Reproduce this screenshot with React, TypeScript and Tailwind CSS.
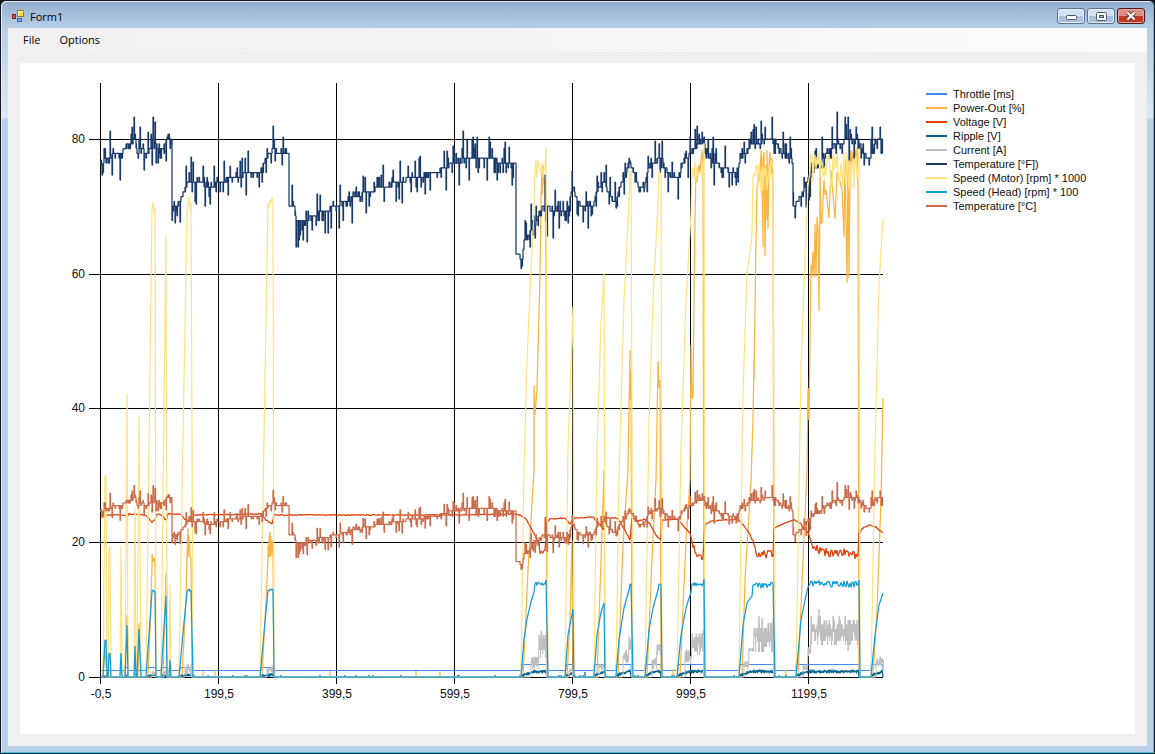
type Point = [number, number];

// Plot area, in drawing units: 0 sits on ZERO_Y, every 20 units are 134.5 high.
const ZERO_Y = 677;
const LEFT = 101;
const RIGHT = 883;

const GRID_X = [
  { x: 100, label: "-0,5" },
  { x: 218, label: "199,5" },
  { x: 336, label: "399,5" },
  { x: 454, label: "599,5" },
  { x: 572, label: "799,5" },
  { x: 690, label: "999,5" },
  { x: 808, label: "1199,5" },
];

const GRID_Y = [
  { y: 139, label: "80" },
  { y: 274, label: "60" },
  { y: 408, label: "40" },
  { y: 542, label: "20" },
  { y: 677, label: "0" },
];

const LEGEND = [
  { name: "Throttle [ms]", line: "bg-[#418cf0]" },
  { name: "Power-Out [%]", line: "bg-[#fcb441]" },
  { name: "Voltage [V]", line: "bg-[#e0400a]" },
  { name: "Ripple [V]", line: "bg-[#056492]" },
  { name: "Current [A]", line: "bg-[#bfbfbf]" },
  { name: "Temperature [°F])", line: "bg-[#1a3b69]" },
  { name: "Speed (Motor) [rpm] * 1000", line: "bg-[#ffe382]" },
  { name: "Speed (Head) [rpm] * 100", line: "bg-[#129cdd]" },
  { name: "Temperature [°C]", line: "bg-[#ca6b4b]" },
];

function makeRandom(seed: number) {
  let s = seed;
  return () => {
    s = (s * 1664525 + 1013904223) % 4294967296;
    return s / 4294967296;
  };
}

function sample(points: Point[], x: number) {
  for (let i = 1; i < points.length; i++) {
    const [x0, y0] = points[i - 1];
    const [x1, y1] = points[i];
    if (x <= x1) return x1 === x0 ? y1 : y0 + ((y1 - y0) * (x - x0)) / (x1 - x0);
  }
  return points[points.length - 1][1];
}

const toPoints = (points: Point[]) =>
  points.map(([x, y]) => `${x.toFixed(1)},${y.toFixed(1)}`).join(" ");

// ---- Temperature -------------------------------------------------------

const tempBase: Point[] = [
  [101, 165], [104, 160], [110, 156], [120, 154], [123, 150], [128, 142], [135, 141],
  [137, 153], [141, 148], [146, 154], [150, 148], [152, 141], [156, 142], [158, 152],
  [163, 147], [166, 140], [171, 140], [172, 204], [176, 206], [180, 200], [184, 192],
  [185, 186], [190, 180], [196, 183], [205, 185], [214, 185], [216, 181], [225, 180],
  [238, 176], [250, 173], [261, 170], [263, 163], [268, 155], [272, 150], [280, 152],
  [288, 154], [289, 205], [294, 205], [296, 222], [303, 221], [316, 214], [325, 211],
  [336, 206], [345, 201], [360, 195], [375, 189], [390, 185], [405, 180], [420, 176],
  [440, 170], [447, 166], [460, 161], [475, 157], [494, 157], [497, 162], [515, 161],
  [516, 256], [522, 257], [524, 240], [530, 232],
  [536, 222], [542, 207], [546, 204], [550, 210], [565, 212], [569, 205], [572, 185],
  [576, 198], [580, 205], [588, 206], [593, 208], [595, 195], [598, 188], [604, 182],
  [608, 192], [612, 200], [616, 199], [620, 185], [626, 172], [630, 163], [634, 174],
  [638, 186], [644, 186], [648, 170], [652, 163], [661, 158], [665, 168], [670, 176],
  [678, 177], [682, 164], [687, 158], [692, 150], [697, 146], [703, 140], [706, 154],
  [712, 163], [720, 166], [730, 172], [737, 170], [741, 157], [748, 150], [752, 142],
  [760, 142], [768, 138], [774, 137], [778, 148], [785, 156], [792, 161], [793, 206],
  [797, 203], [803, 190], [808, 178], [815, 168], [822, 160], [830, 148], [836, 143],
  [845, 141], [858, 140], [862, 151], [866, 157], [870, 158], [874, 145], [878, 140],
  [883, 138],
];

const tempPeaks: Point[] = [
  [102, 175], [110, 131], [112, 175], [120, 180], [132, 127], [134, 117], [140, 127],
  [144, 170], [148, 132], [153, 117], [155, 122], [152, 165], [167, 137], [166, 161],
  [175, 223], [180, 222], [186, 166], [191, 157], [193, 162], [196, 204], [203, 166],
  [210, 204], [214, 166], [224, 161], [228, 195], [230, 166], [240, 161], [246, 195],
  [248, 151], [273, 126], [275, 161], [283, 137], [282, 165], [292, 185], [296, 247],
  [298, 247], [303, 240], [307, 242], [317, 194], [320, 195], [325, 233], [328, 233],
  [331, 228], [339, 228], [340, 185], [352, 223], [363, 176], [366, 213], [381, 175],
  [383, 165], [393, 170], [399, 199], [400, 161], [402, 203], [408, 166], [415, 161],
  [420, 156], [425, 194], [430, 190], [444, 151], [446, 190], [447, 151], [453, 146],
  [459, 185], [463, 131], [469, 180], [473, 137], [477, 137], [487, 180], [489, 137],
  [490, 142], [497, 180], [505, 142], [509, 147], [512, 185],
  [522, 266], [526, 223], [530, 247], [531, 204], [535, 238], [545, 175], [547, 236],
  [553, 238], [555, 190], [559, 228], [568, 223], [572, 171], [577, 214], [583, 222],
  [588, 228], [592, 214], [597, 176], [606, 165], [609, 204], [616, 208], [624, 194],
  [630, 161], [648, 156], [655, 141], [662, 141], [672, 162], [678, 199], [686, 151],
  [690, 137], [697, 126], [702, 132], [704, 137], [713, 137], [714, 185], [725, 146],
  [732, 185], [736, 185], [744, 142], [751, 132], [756, 127], [761, 121], [765, 127],
  [772, 117], [783, 132], [790, 137], [795, 218], [806, 207], [809, 200], [815, 151],
  [822, 137], [832, 127], [837, 112], [845, 117], [848, 117], [849, 160], [856, 127],
  [864, 165], [869, 165], [872, 127], [880, 127], [882, 153],
];

const STEP = 4.8;

function buildTemperature(): Point[] {
  const random = makeRandom(11);
  const out: Point[] = [];
  let level = sample(tempBase, LEFT);
  for (let x = LEFT; x <= RIGHT; x++) {
    const base = sample(tempBase, x);
    const next = Math.abs(base - level) > STEP / 2 ? 139 + Math.round((base - 139) / STEP) * STEP : level;
    out.push([x, level], [x, next]);
    level = next;
    const peak = tempPeaks.find(([px]) => px === x);
    if (peak) {
      out.push([x, peak[1]], [x + 0.5, peak[1]], [x + 0.5, level]);
      continue;
    }
    const quiet = x > 515 && x < 521;
    if (!quiet && random() < 0.52) {
      const roll = random();
      const size = roll < 0.52 ? 1 : roll < 0.8 ? 2 : roll < 0.95 ? 3 : 4;
      const tip = level + (random() < 0.45 ? -1 : 1) * size * STEP;
      out.push([x, tip], [x + 0.5, tip], [x + 0.5, level]);
    }
  }
  return out;
}

const tempF = buildTemperature();
const tempC = tempF.map(([x, y]): Point => [x, ZERO_Y - (ZERO_Y - y) / 1.8 + 119.5]);

// ---- Rotor and motor speed ---------------------------------------------

const headRuns: Point[][] = [
  [[103, 677], [105, 640], [106, 640], [107, 677]],
  [[108, 677], [109, 654], [110, 653], [111, 677]],
  [[120, 677], [121, 653], [122, 677]],
  [[125, 677], [127, 625], [128, 677]],
  [[134, 677], [135, 646], [136, 677]],
  [[137, 677], [139, 629], [141, 677]],
  [[146, 677], [149, 635], [152, 591], [155, 591], [156, 677]],
  [[161, 677], [164, 627], [166, 596], [167, 677]],
  [[169, 677], [170, 660], [171, 677]],
  [[179, 677], [183, 633], [187, 592], [188, 590], [191, 590], [193, 677]],
  [[260, 677], [264, 633], [268, 590], [273, 590], [274, 677]],
  [[521, 677], [524, 639], [527, 619], [531, 602], [534, 592], [535, 584], [545, 584], [546, 580], [548, 677]],
  [[565, 677], [568, 635], [573, 609], [574, 677]],
  [[594, 677], [597, 635], [601, 612], [604, 603], [605, 677]],
  [[616, 677], [619, 640], [624, 608], [629, 590], [630, 584], [631, 584], [633, 677]],
  [[645, 677], [649, 630], [653, 608], [658, 590], [659, 584], [661, 585], [662, 677]],
  [[677, 677], [681, 635], [686, 608], [691, 592], [692, 584], [703, 584], [704, 579], [705, 677]],
  [[739, 677], [743, 625], [747, 603], [752, 596], [753, 585], [773, 584], [775, 677]],
  [[796, 677], [801, 620], [805, 600], [808, 587], [810, 584], [858, 584], [859, 580], [860, 677]],
  [[871, 677], [875, 635], [879, 605], [883, 593]],
];

function buildHead(): Point[] {
  const random = makeRandom(5);
  const out: Point[] = [[LEFT, ZERO_Y]];
  for (const run of headRuns) {
    run.forEach(([x, y], i) => {
      out.push([x, y]);
      const next = run[i + 1];
      // Governed plateau: the speed hunts around its set point.
      if (next && next[0] - x > 2 && Math.abs(next[1] - y) < 2) {
        const swing = x > 750 ? 7 : 4;
        for (let px = x + 1; px < next[0]; px++) out.push([px, y + (random() - 0.5) * swing]);
      }
    });
  }
  return out;
}

const head = buildHead();
const motor = head.map(([x, y]): Point => [x, ZERO_Y - (ZERO_Y - y) * 5.45]);

// ---- Power --------------------------------------------------------------

const power: Point[] = [
  [101, 677], [103, 677], [105, 650], [107, 677], [125, 677], [127, 615], [128, 640], [128, 677],
  [138, 677], [139, 623], [141, 677],
  [148, 677], [150, 630], [152, 565], [152, 554], [153, 562], [154, 558], [155, 562], [156, 677],
  [163, 677], [166, 573], [167, 590], [167, 677],
  [182, 677], [186, 600], [187, 555], [188, 528], [188, 557], [189, 535], [190, 557], [191, 558], [192, 677],
  [203, 677], [203, 671], [203, 677], [215, 677], [215, 670], [215, 677],
  [262, 677], [266, 600], [268, 560], [268, 545], [269, 557], [269, 538], [270, 532], [270, 557],
  [271, 536], [271, 556], [272, 540], [273, 557], [274, 677],
  [330, 677], [330, 671], [330, 677], [416, 677], [416, 671], [416, 677], [440, 677], [440, 672], [440, 677],
  [523, 677], [528, 570], [534, 470], [534, 385], [535, 415], [537, 390], [538, 350], [540, 275],
  [541, 200], [542, 170], [542, 195], [543, 165], [544, 185], [545, 182], [546, 280], [547, 677],
  [567, 677], [570, 620], [572, 540], [573, 677],
  [597, 677], [601, 560], [604, 470], [605, 677],
  [618, 677], [623, 545], [628, 470], [630, 350], [630, 400], [631, 372], [632, 677],
  [647, 677], [652, 560], [656, 480], [658, 361], [659, 388], [660, 380], [661, 677],
  [673, 677], [673, 669], [673, 677],
  [680, 677], [686, 540], [690, 480], [691, 345], [692, 398], [693, 398], [694, 290], [695, 220],
  [696, 170], [697, 182], [699, 165], [700, 172], [702, 150], [703, 165], [704, 677],
  [742, 677], [745, 580], [751, 480], [753, 420], [754, 360], [754, 380], [755, 310], [756, 240],
  [757, 190], [759, 165], [760, 182], [761, 150], [762, 175], [763, 247], [763, 160], [764, 152],
  [765, 256], [766, 165], [767, 220], [767, 150], [768, 229], [769, 165], [770, 152], [771, 175],
  [772, 158], [773, 180], [774, 677],
  [786, 677], [786, 670], [786, 677],
  [798, 677], [803, 560], [807, 470], [808, 388], [809, 420], [810, 340], [811, 265], [812, 277],
  [813, 252], [814, 277], [815, 224], [816, 277], [817, 217], [818, 228], [819, 311], [820, 200],
  [820, 165], [821, 224], [822, 222], [824, 180], [825, 195], [826, 190], [829, 218], [831, 170],
  [835, 219], [837, 172], [840, 182], [842, 190], [844, 237], [845, 160], [847, 283], [848, 160],
  [849, 278], [850, 170], [851, 150], [852, 165], [853, 152], [854, 162], [855, 150], [856, 165],
  [857, 148], [858, 190], [859, 677],
  [873, 677], [877, 610], [881, 500], [883, 398],
];

// ---- Voltage ------------------------------------------------------------

const voltageBase: Point[] = [
  [101, 515], [125, 515], [127, 517], [129, 514], [145, 515], [149, 519], [152, 522], [155, 520],
  [157, 514], [161, 515], [166, 520], [168, 514], [180, 514], [185, 519], [190, 521], [192, 515],
  [261, 514], [266, 520], [272, 524], [274, 515], [454, 515], [515, 514], [520, 515], [526, 519],
  [532, 530], [538, 541], [541, 554], [545, 553], [547, 522], [550, 519], [565, 518], [570, 524],
  [574, 518], [593, 517], [598, 523], [604, 530], [605, 518], [616, 518], [620, 522], [626, 532],
  [630, 540], [632, 518], [638, 521], [645, 519], [650, 524], [656, 535], [661, 540], [662, 520],
  [678, 519], [684, 527], [690, 533], [694, 549], [698, 556], [703, 557], [705, 524], [712, 521],
  [738, 519], [744, 526], [750, 534], [754, 545], [758, 555], [768, 554], [773, 553], [774, 528],
  [785, 523], [794, 520], [800, 523], [808, 532], [812, 545], [820, 551], [835, 554], [845, 552],
  [858, 556], [859, 533], [863, 528], [870, 525], [876, 527], [883, 533],
];

function buildVoltage(): Point[] {
  const random = makeRandom(23);
  const out: Point[] = [];
  for (let x = LEFT; x <= RIGHT; x++) {
    const y = sample(voltageBase, x);
    out.push([x, y + (random() - 0.5) * (y > 542 ? 8 : 1)]);
  }
  return out;
}

const voltage = buildVoltage();

// ---- Throttle, ripple, current -----------------------------------------

const runs = [
  { from: 125, to: 128, throttle: 667 },
  { from: 146, to: 156, throttle: 667 },
  { from: 161, to: 167, throttle: 667 },
  { from: 180, to: 192, throttle: 667 },
  { from: 261, to: 274, throttle: 667 },
  { from: 522, to: 547, throttle: 664 },
  { from: 566, to: 573, throttle: 664 },
  { from: 594, to: 605, throttle: 664 },
  { from: 616, to: 631, throttle: 664 },
  { from: 645, to: 661, throttle: 664 },
  { from: 678, to: 704, throttle: 664 },
  { from: 739, to: 774, throttle: 664 },
  { from: 796, to: 859, throttle: 664 },
  { from: 871, to: 883, throttle: 664 },
];

function buildThrottle(): Point[] {
  const out: Point[] = [[LEFT, 670.5]];
  for (const { from, to, throttle } of runs) {
    out.push([from, 670.5], [from, throttle + 0.5], [to, throttle + 0.5], [to, 670.5]);
  }
  return out;
}

function buildRipple(): Point[] {
  const random = makeRandom(31);
  const out: Point[] = [];
  for (let x = LEFT; x <= RIGHT; x++) {
    const run = runs.find(({ from, to }) => x > from && x < to);
    if (run) {
      const height = run.throttle === 667 ? 2.5 : 5.5;
      const rise = Math.min(1, (x - run.from + 3) / 14);
      const y = ZERO_Y - height * rise;
      out.push([x, y - random() * 2], [x + 0.5, y + random() * 2]);
    } else {
      out.push([x, random() < 0.06 ? 675.5 : 677]);
    }
    if (x === 585) out.push([585, 672], [585, 677]);
  }
  return out;
}

// Each block swings between its low and high reading.
const currentBlocks = [
  { from: 152, to: 155, high: 671, low: 676 },
  { from: 164, to: 166, high: 671, low: 676 },
  { from: 185, to: 191, high: 664, low: 675 },
  { from: 267, to: 273, high: 665, low: 675 },
  { from: 531, to: 538, high: 655, low: 669 },
  { from: 539, to: 546, high: 631, low: 658 },
  { from: 569, to: 572, high: 668, low: 673 },
  { from: 599, to: 604, high: 663, low: 671 },
  { from: 623, to: 628, high: 650, low: 663 },
  { from: 629, to: 631, high: 637, low: 652 },
  { from: 652, to: 656, high: 658, low: 671 },
  { from: 657, to: 661, high: 643, low: 655 },
  { from: 685, to: 691, high: 650, low: 664 },
  { from: 692, to: 703, high: 630, low: 655 },
  { from: 744, to: 748, high: 660, low: 670 },
  { from: 749, to: 753, high: 648, low: 652 },
  { from: 754, to: 773, high: 618, low: 652 },
  { from: 803, to: 807, high: 664, low: 671 },
  { from: 808, to: 810, high: 643, low: 658 },
  { from: 811, to: 859, high: 616, low: 645 },
  { from: 876, to: 883, high: 657, low: 668 },
];

function buildCurrent(): Point[] {
  const random = makeRandom(47);
  const out: Point[] = [[LEFT, ZERO_Y]];
  for (const { from, to, high, low } of currentBlocks) {
    if (from - out[out.length - 1][0] > 2) out.push([out[out.length - 1][0], ZERO_Y], [from, ZERO_Y]);
    const span = low - high;
    for (let x = from; x <= to; x++) {
      const top = high + Math.round(random() * 3) * span * 0.15;
      const bottom = low - Math.round(random() * 3) * span * 0.15;
      out.push([x, top], [x + 0.5, top], [x + 0.5, bottom]);
      if (x === 819) out.push([819, 609], [819, 630]);
      if (x === 759) out.push([759, 616], [759, 640]);
      if (x === 848) out.push([848, 651], [848, 630]);
    }
  }
  return out;
}

const SERIES = [
  { name: "throttle", color: "#418cf0", width: 1, points: buildThrottle() },
  { name: "power", color: "#fcb441", width: 1.25, points: power },
  { name: "voltage", color: "#e0400a", width: 1.25, points: voltage },
  { name: "ripple", color: "#056492", width: 1.25, points: buildRipple() },
  { name: "current", color: "#bfbfbf", width: 1, points: buildCurrent() },
  { name: "tempF", color: "#1a3b69", width: 1.25, points: tempF },
  { name: "motor", color: "#ffe382", width: 1.25, points: motor },
  { name: "head", color: "#129cdd", width: 1.25, points: head },
  { name: "tempC", color: "#ca6b4b", width: 1.25, points: tempC },
];

function Chart() {
  return (
    <svg viewBox="20 63 906 671" className="min-w-0 flex-1 self-start" role="img" aria-label="Flight log">
      <g stroke="#000" strokeWidth="1" shapeRendering="crispEdges">
        {GRID_Y.map(({ y }) => (
          <line key={y} x1="89" x2={RIGHT} y1={y + 0.5} y2={y + 0.5} />
        ))}
        {GRID_X.map(({ x }) => (
          <line key={x} x1={x + 0.5} x2={x + 0.5} y1="83" y2="684" />
        ))}
      </g>
      <g fill="#111" fontSize="12" fontFamily="'Liberation Sans', Arial, sans-serif">
        {GRID_Y.map(({ y, label }) => (
          <text key={y} x="85" y={y + 4} textAnchor="end">
            {label}
          </text>
        ))}
        {GRID_X.map(({ x, label }) => (
          <text key={x} x={x + 1} y="698" textAnchor="middle">
            {label}
          </text>
        ))}
      </g>
      {SERIES.map(({ name, color, width, points }) => (
        <polyline key={name} points={toPoints(points)} fill="none" stroke={color} strokeWidth={width} strokeLinejoin="bevel" />
      ))}
    </svg>
  );
}

function Legend() {
  return (
    <ul className="w-[209px] shrink-0 pt-6 text-[11px] leading-[14px] text-[#111]">
      {LEGEND.map(({ name, line }) => (
        <li key={name} className="flex items-center gap-1.5 whitespace-nowrap">
          <span className={`h-0.5 w-[21px] ${line}`} />
          {name}
        </li>
      ))}
    </ul>
  );
}

function TitleBar() {
  const button =
    "flex h-4 w-7 items-center justify-center rounded-[3px] border border-[#5b7590] bg-linear-to-b from-[#d3e1f0] from-50% to-[#a9c1dc] to-50% shadow-[inset_0_0_0_1px_#e3edf7]";
  return (
    <header className="flex h-[25px] items-center pl-1 pr-0.5">
      <div className="flex flex-1 items-center gap-[5px] pt-0.5">
        <svg width="13" height="13" viewBox="0 0 13 13" aria-hidden="true">
          <rect x="0.5" y="4.5" width="3" height="4" fill="#d9534a" stroke="#8c1a12" />
          <rect x="5.5" y="0.5" width="6" height="6" fill="#ffd83c" stroke="#a07a16" />
          <path d="M6.5 6V1.5h5" stroke="#fff3a8" fill="none" />
          <rect x="5.5" y="8.5" width="4" height="3" fill="#7da2f0" stroke="#4467c4" />
        </svg>
        <h1 className="text-[11px] leading-4 text-black">Form1</h1>
      </div>
      <div className="flex gap-0.5 pt-px">
        <button type="button" aria-label="Minimize" className={button}>
          <svg width="11" height="5" viewBox="0 0 11 5" className="mt-0.5">
            <rect x="0.5" y="0.5" width="10" height="4" rx="1" fill="#fff" stroke="#4b5667" />
          </svg>
        </button>
        <button type="button" aria-label="Maximize" className={button}>
          <svg width="11" height="9" viewBox="0 0 11 9">
            <rect x="0.5" y="0.5" width="10" height="8" rx="1" fill="#fff" stroke="#4b5667" />
            <rect x="3.5" y="3.5" width="4" height="2" fill="#9fb9d6" stroke="#4b5667" />
          </svg>
        </button>
        <button
          type="button"
          aria-label="Close"
          className="flex h-4 w-7 items-center justify-center rounded-[3px] border border-[#4a1720] bg-linear-to-b from-[#dd8f85] from-50% to-[#bf3a26] to-50% shadow-[inset_0_0_0_1px_#e7a79e]"
        >
          <svg width="12" height="10" viewBox="0 0 12 10">
            <path d="M2.5 1.5l7 7M9.5 1.5l-7 7" stroke="#5a3038" strokeWidth="4" />
            <path d="M2.5 1.5l7 7M9.5 1.5l-7 7" stroke="#fff" strokeWidth="2.2" />
          </svg>
        </button>
      </div>
    </header>
  );
}

export default function App() {
  return (
    <div className="flex min-h-screen bg-[#10131c] font-['Open_Sans','Noto_Sans',sans-serif]">
      <div className="flex flex-1 flex-col rounded-t-md border border-[#14171f] border-r-[#0b2630] bg-[#b9d1ea] bg-[linear-gradient(180deg,#93aece_0px,#b7cfe8_27px,#dce9f7_117px,#b9d1ea_118px)] px-1.5 pb-[7px] shadow-[inset_1px_1px_0_#e4eefa,inset_-1px_-1px_0_#3fc4e4]">
        <div className="flex flex-1 flex-col px-px pt-0.5">
          <TitleBar />
          <nav className="flex h-6 items-center bg-linear-to-r from-[#f0f0f0] to-[#fcfcfc] px-1 text-[11px] text-black">
            <button type="button" className="px-[11px]">
              File
            </button>
            <button type="button" className="px-2">
              Options
            </button>
          </nav>
          <main className="flex flex-1 flex-col bg-[#f0f0f0] p-3 pt-[11px]">
            <div className="flex flex-1 bg-white font-['Liberation_Sans',Arial,sans-serif]">
              <Chart />
              <Legend />
            </div>
          </main>
        </div>
      </div>
    </div>
  );
}
